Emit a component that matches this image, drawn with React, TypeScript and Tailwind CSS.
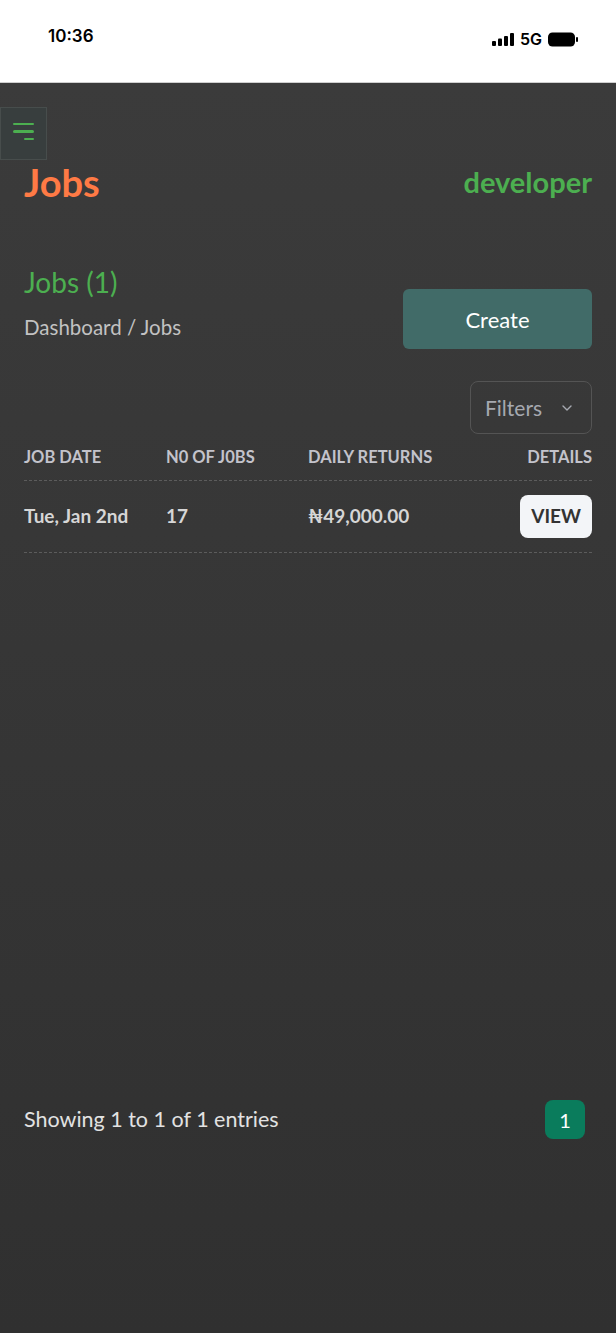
import React from 'react';

const font = { fontFamily: 'Lato, "Open Sans", sans-serif' };

function StatusBar() {
  return (
    <div className="h-[83px] bg-white flex items-start justify-between px-12 pt-[24px] border-b border-[#cfcfcf]">
      <span className="text-[17px] font-semibold text-black" style={{ fontFamily: 'Inter, sans-serif' }}>
        10:36
      </span>
      <div className="flex items-center gap-[6px] pt-[3px] -mr-[10px]">
        <svg width="22" height="13" viewBox="0 0 22 13">
          <rect x="0" y="8" width="4" height="5" rx="1" fill="#000" />
          <rect x="6" y="5.5" width="4" height="7.5" rx="1" fill="#000" />
          <rect x="12" y="3" width="4" height="10" rx="1" fill="#000" />
          <rect x="18" y="0" width="4" height="13" rx="1" fill="#000" />
        </svg>
        <span className="text-[16px] font-semibold text-black" style={{ fontFamily: 'Inter, sans-serif' }}>
          5G
        </span>
        <svg width="30" height="15" viewBox="0 0 30 15">
          <rect x="0" y="0.5" width="27" height="14" rx="4.5" fill="#000" />
          <rect x="28" y="5" width="2" height="5" rx="1" fill="#000" />
        </svg>
      </div>
    </div>
  );
}

export default function App() {
  return (
    <div className="min-h-[1333px] flex flex-col" style={font}>
      <StatusBar />
      <div className="flex-1 bg-gradient-to-b from-[#3b3b3b] to-[#303030] flex flex-col">
        <div className="pt-[24px]">
          <button className="w-[47px] h-[53px] bg-[#383e3e] border border-[#474d4c] flex flex-col items-end justify-center gap-[5px] pr-[12px] pb-[4px]">
            <span className="block w-[21px] h-[2.5px] bg-[#4caf50] rounded" />
            <span className="block w-[21px] h-[2.5px] bg-[#4caf50] rounded" />
            <span className="block w-[10px] h-[2.5px] bg-[#4caf50] rounded" />
          </button>
        </div>

        <div className="px-6">
          <div className="flex items-center justify-between -mt-[2px]">
            <h1 className="text-[38px] font-bold text-[#ff7a45] leading-[48px]">Jobs</h1>
            <span className="text-[29px] font-bold text-[#4caf50] leading-[40px]">developer</span>
          </div>

          <div className="flex items-end justify-between mt-[58px]">
            <div>
              <h2 className="text-[28px] text-[#4caf50] leading-[36px]">Jobs (1)</h2>
              <p className="text-[20.5px] text-[#c2c2c2] mt-[13px] leading-[28px]">Dashboard / Jobs</p>
            </div>
            <button className="w-[189px] h-[60px] rounded-md bg-[#416b68] text-white text-[22px] mb-[-8px]">
              Create
            </button>
          </div>

          <div className="flex justify-end mt-[40px]">
            <button className="w-[122px] h-[53px] rounded-lg border border-[#545454] flex items-center justify-between pl-[14px] pr-[18px] text-[21px] text-[#a6a9b0]">
              Filters
              <svg width="12" height="8" viewBox="0 0 12 8" fill="none">
                <path d="M2 2l4 4 4-4" stroke="#a6a9b0" strokeWidth="1.4" strokeLinecap="round" strokeLinejoin="round" />
              </svg>
            </button>
          </div>

          <div className="grid grid-cols-4 text-[16.5px] leading-[22px] font-bold text-[#c3c3cb] mt-[12px] pb-[12px] border-b border-dashed border-[#5c5c5c]">
            <span>JOB DATE</span>
            <span>N0 OF J0BS</span>
            <span>DAILY RETURNS</span>
            <span className="text-right">DETAILS</span>
          </div>

          <div className="grid grid-cols-4 items-center text-[19px] font-bold text-[#d6d6d6] py-[14px] border-b border-dashed border-[#5c5c5c]">
            <span>Tue, Jan 2nd</span>
            <span>17</span>
            <span>₦49,000.00</span>
            <div className="flex justify-end">
              <button className="h-[43px] px-[11px] rounded-lg bg-[#f3f5f8] text-[#333] text-[19px] font-bold">
                VIEW
              </button>
            </div>
          </div>
        </div>

        <div className="mt-[547px] px-6 flex items-center justify-between">
          <span className="text-[21.5px] text-[#e2e2e2]">Showing 1 to 1 of 1 entries</span>
          <span className="w-[40px] h-[39px] rounded-lg bg-[#0a7c5c] text-white text-[20px] flex items-center justify-center mr-[7px]">
            1
          </span>
        </div>
      </div>
    </div>
  );
}
